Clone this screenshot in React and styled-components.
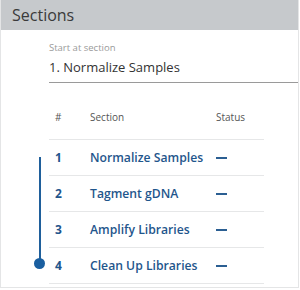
import React from 'react';
import styled, { createGlobalStyle } from 'styled-components';

const GlobalStyle = createGlobalStyle`
  body {
    margin: 0;
    font-family: 'Open Sans', 'Noto Sans', sans-serif;
    background: #ffffff;
  }
`;

const Panel = styled.div`
  width: 299px;
  height: 288px;
  border: 1px solid #e4e5e6;
  border-top: none;
  box-sizing: border-box;
  background: #fff;
  overflow: hidden;
`;

const Header = styled.div`
  height: 30px;
  background: #c6c9cc;
  color: #3a3a3a;
  font-size: 16px;
  line-height: 30px;
  padding-left: 11px;
`;

const Body = styled.div`
  padding: 11px 0 0 48px;
`;

const Field = styled.div`
  border-bottom: 1px solid #9a9a9a;
  padding-bottom: 6px;
`;

const FieldLabel = styled.div`
  font-size: 9.5px;
  color: #9a9a9a;
  line-height: 14px;
`;

const FieldValue = styled.div`
  font-size: 13px;
  color: #333;
  line-height: 18px;
  margin-top: 3px;
`;

const TableWrap = styled.div`
  position: relative;
  margin-top: 21px;
  width: 215px;
`;

const Row = styled.div`
  display: grid;
  grid-template-columns: 35px 126px 1fr;
  align-items: center;
  height: 35px;
  box-sizing: ${(p) => (p.head ? 'border-box' : 'content-box')};
  padding-bottom: ${(p) => (p.head ? '9px' : '0')};
  height: ${(p) => (p.head ? '36px' : '35px')};
  border-bottom: 1px solid #e6e7e8;
  padding-left: 6px;
`;

const HeadCell = styled.div`
  font-size: 10px;
  color: #555;
`;

const Num = styled.div`
  font-size: 12px;
  font-weight: 700;
  color: #1f568c;
`;

const Name = styled.div`
  font-size: 12.2px;
  font-weight: 600;
  color: #1f568c;
  white-space: nowrap;
`;

const Dash = styled.div`
  width: 11px;
  height: 2px;
  background: #2b5f92;
`;

const Track = styled.div`
  position: absolute;
  left: -10px;
  top: 53px;
  height: 107px;
  width: 2px;
  background: #1f5f9b;
`;

const Dot = styled.div`
  position: absolute;
  left: -15px;
  top: 154px;
  width: 11px;
  height: 11px;
  border-radius: 50%;
  background: #1a5fa0;
`;

const sections = ['Normalize Samples', 'Tagment gDNA', 'Amplify Libraries', 'Clean Up Libraries'];

export default function App() {
  return (
    <>
      <GlobalStyle />
      <Panel>
        <Header>Sections</Header>
        <Body>
          <Field>
            <FieldLabel>Start at section</FieldLabel>
            <FieldValue>1. Normalize Samples</FieldValue>
          </Field>
          <TableWrap>
            <Row head>
              <HeadCell>#</HeadCell>
              <HeadCell>Section</HeadCell>
              <HeadCell>Status</HeadCell>
            </Row>
            {sections.map((s, i) => (
              <Row key={s}>
                <Num>{i + 1}</Num>
                <Name>{s}</Name>
                <Dash />
              </Row>
            ))}
            <Track />
            <Dot />
          </TableWrap>
        </Body>
      </Panel>
    </>
  );
}
